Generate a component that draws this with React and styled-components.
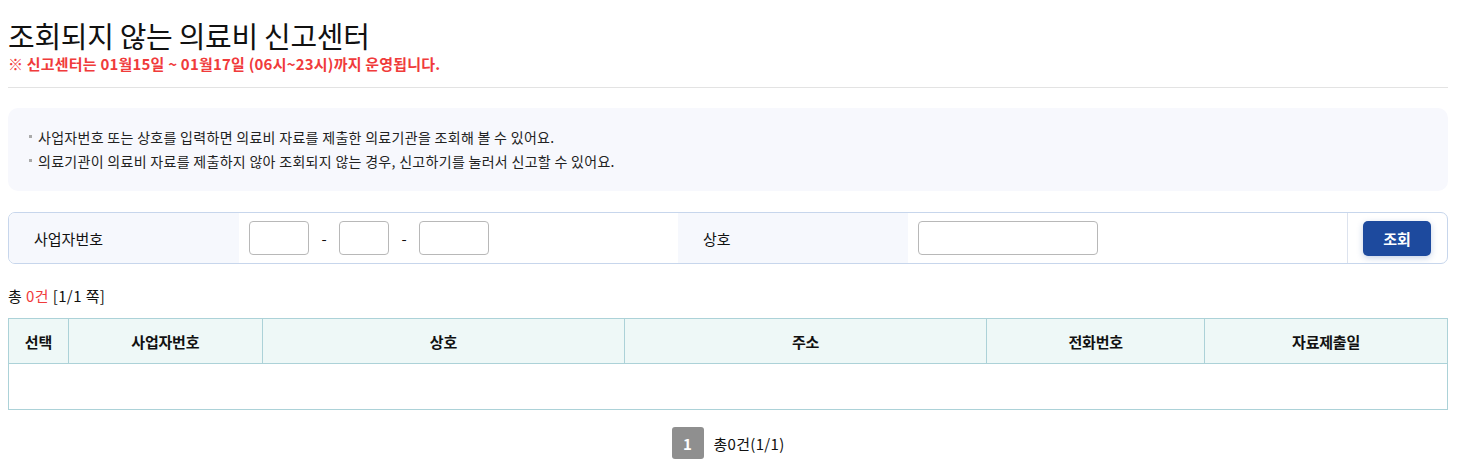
import React from 'react'
import styled, { createGlobalStyle } from 'styled-components'

const GlobalStyle = createGlobalStyle`
  body {
    margin: 0;
    background: #fff;
    color: #111;
    font-family: "Noto Sans CJK KR", "Noto Sans", sans-serif;
  }
`

const Page = styled.div`
  width: 1440px;
  padding: 0 8px;
`

const Header = styled.div`
  padding-top: 16px;
  padding-bottom: 13px;
  border-bottom: 1px solid #e3e3e3;
`

const Title = styled.h1`
  margin: 0;
  font-size: 29px;
  line-height: 38px;
  font-weight: 400;
  color: #111;
  letter-spacing: -0.3px;
`

const Notice = styled.p`
  margin: 0;
  font-size: 15px;
  line-height: 20px;
  font-weight: 700;
  color: #f03b3b;
  letter-spacing: 0.2px;
`

const InfoBox = styled.ul`
  list-style: none;
  margin: 20px 0 0;
  padding: 17px 20px 18px;
  background: #f7f8fd;
  border-radius: 10px;
`

const InfoItem = styled.li`
  position: relative;
  padding-left: 10px;
  font-size: 14px;
  line-height: 24px;
  color: #222;
  letter-spacing: 0.3px;

  &::before {
    content: '';
    position: absolute;
    left: 1px;
    top: 10px;
    width: 3px;
    height: 3px;
    background: #aaa;
  }
`

const SearchBar = styled.div`
  display: flex;
  align-items: stretch;
  margin-top: 21px;
  height: 50px;
  border: 1px solid #c7d6ec;
  border-radius: 7px;
  overflow: hidden;
`

const Label = styled.div`
  display: flex;
  align-items: center;
  width: ${p => p.$width}px;
  padding-left: ${p => p.$pad}px;
  box-sizing: border-box;
  background: #f6f8fd;
  font-size: 15px;
  color: #111;
`

const Field = styled.div`
  display: flex;
  align-items: center;
  padding-left: 10px;
  width: ${p => p.$width}px;
  box-sizing: border-box;
`

const TextInput = styled.input`
  width: ${p => p.$width}px;
  height: 34px;
  box-sizing: border-box;
  border: 1px solid #b8b8b8;
  border-radius: 4px;
  background: #fff;
  padding: 0 6px;
  font-size: 14px;
  outline: none;
`

const Dash = styled.span`
  width: 30px;
  text-align: center;
  font-size: 15px;
  color: #111;
`

const ButtonCell = styled.div`
  margin-left: auto;
  display: flex;
  align-items: center;
  padding: 0 16px 0 15px;
  border-left: 1px solid #dde3ee;
`

const SearchButton = styled.button`
  width: 68px;
  height: 35px;
  border: none;
  border-radius: 5px;
  background: #1d4a9e;
  color: #fff;
  font-family: inherit;
  font-size: 15px;
  font-weight: 700;
  box-shadow: 0 2px 6px rgba(29, 74, 158, 0.25);
  cursor: pointer;
`

const Count = styled.div`
  margin-top: 22px;
  font-size: 15px;
  line-height: 20px;
  color: #111;
  letter-spacing: 0.4px;
`

const Red = styled.span`
  color: #f03b3b;
`

const Table = styled.table`
  width: 100%;
  margin-top: 12px;
  border-collapse: collapse;
  border: 1px solid #acd2d8;
`

const Th = styled.th`
  width: ${p => p.$width}px;
  height: 44px;
  padding: 0;
  background: #eef8f7;
  border: 1px solid #acd2d8;
  font-size: 15px;
  font-weight: 700;
  color: #111;
  letter-spacing: -0.2px;
`

const Td = styled.td`
  height: 43px;
  border: 1px solid #acd2d8;
`

const Pager = styled.div`
  display: flex;
  align-items: center;
  justify-content: center;
  gap: 10px;
  margin-top: 17px;
`

const PageNum = styled.span`
  display: flex;
  align-items: center;
  justify-content: center;
  width: 32px;
  height: 32px;
  border-radius: 3px;
  background: #8f8f8f;
  color: #fff;
  font-size: 15px;
  font-weight: 700;
`

const PagerText = styled.span`
  font-size: 15px;
  color: #111;
  letter-spacing: 0.3px;
`

const columns = [
  { name: '선택', width: 59 },
  { name: '사업자번호', width: 194 },
  { name: '상호', width: 363 },
  { name: '주소', width: 363 },
  { name: '전화번호', width: 218 },
  { name: '자료제출일', width: 243 },
]

export default function App() {
  return (
    <Page>
      <GlobalStyle />
      <Header>
        <Title>조회되지 않는 의료비 신고센터</Title>
        <Notice>※ 신고센터는 01월15일 ~ 01월17일 (06시~23시)까지 운영됩니다.</Notice>
      </Header>

      <InfoBox>
        <InfoItem>사업자번호 또는 상호를 입력하면 의료비 자료를 제출한 의료기관을 조회해 볼 수 있어요.</InfoItem>
        <InfoItem>의료기관이 의료비 자료를 제출하지 않아 조회되지 않는 경우, 신고하기를 눌러서 신고할 수 있어요.</InfoItem>
      </InfoBox>

      <SearchBar>
        <Label $width={230} $pad={25}>사업자번호</Label>
        <Field $width={439}>
          <TextInput $width={60} />
          <Dash>-</Dash>
          <TextInput $width={50} />
          <Dash>-</Dash>
          <TextInput $width={70} />
        </Field>
        <Label $width={230} $pad={25}>상호</Label>
        <Field $width={200}>
          <TextInput $width={180} />
        </Field>
        <ButtonCell>
          <SearchButton>조회</SearchButton>
        </ButtonCell>
      </SearchBar>

      <Count>
        총 <Red>0건</Red> [1/1 쪽]
      </Count>

      <Table>
        <thead>
          <tr>
            {columns.map(c => (
              <Th key={c.name} $width={c.width}>{c.name}</Th>
            ))}
          </tr>
        </thead>
        <tbody>
          <tr>
            <Td colSpan={6} />
          </tr>
        </tbody>
      </Table>

      <Pager>
        <PageNum>1</PageNum>
        <PagerText>총0건(1/1)</PagerText>
      </Pager>
    </Page>
  )
}
